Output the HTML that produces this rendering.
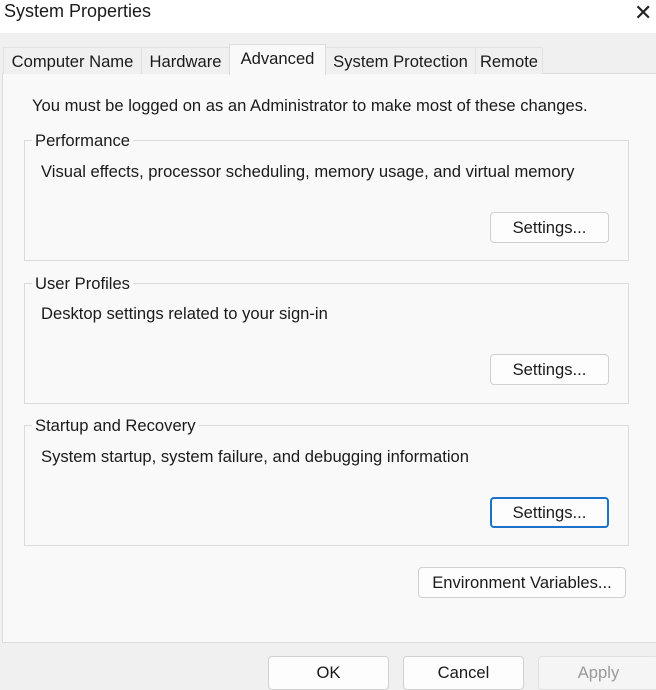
<!DOCTYPE html>
<html><head><style>
*{box-sizing:border-box;margin:0;padding:0}
body{width:656px;height:682px;overflow:hidden;background:#f0f0f0;font-family:"Liberation Sans",sans-serif;font-size:16.6px;color:#1a1a1a;position:relative}
.a{position:absolute;white-space:nowrap}
.title{left:0;top:0;width:656px;height:33px;background:#fff}
.tab{top:47px;height:27px;background:#f0f0f0;border:1px solid #e2e2e2;border-bottom:none;padding-top:4px;text-align:center}
.panel{left:2px;top:73px;width:660px;height:570px;background:#f9f9f9;border:1px solid #dcdcdc}
.grp{left:24px;width:605px;height:121px;border:1px solid #dadada}
.lg{background:#f9f9f9;padding:0 3px}
.btn{background:#fdfdfd;border:1px solid #d0d0d0;border-radius:4px;text-align:center;line-height:29px}
</style></head><body>
<div class="a title"></div>
<div class="a" style="left:4px;top:1px;font-size:18px;">System Properties</div>
<div class="a" style="left:634px;top:0px;font-size:22px;font-weight:300;color:#222">✕</div>
<div class="a panel"></div>
<div class="a tab" style="left:3px;width:139px">Computer Name</div>
<div class="a tab" style="left:141px;width:89px">Hardware</div>
<div class="a tab" style="left:325px;width:151px">System Protection</div>
<div class="a tab" style="left:475px;width:68px">Remote</div>
<div class="a" style="left:229px;top:44px;width:97px;height:31px;background:#f9f9f9;border:1px solid #dcdcdc;border-bottom:none;text-align:center;padding-top:4px">Advanced</div>
<div class="a" style="left:32px;top:96px">You must be logged on as an Administrator to make most of these changes.</div>

<div class="a grp" style="top:140px"></div>
<div class="a lg" style="left:32px;top:131px">Performance</div>
<div class="a" style="left:41px;top:162px">Visual effects, processor scheduling, memory usage, and virtual memory</div>
<div class="a btn" style="left:490px;top:212px;width:119px;height:31px">Settings...</div>

<div class="a grp" style="top:283px"></div>
<div class="a lg" style="left:32px;top:274px">User Profiles</div>
<div class="a" style="left:41px;top:304px">Desktop settings related to your sign-in</div>
<div class="a btn" style="left:490px;top:354px;width:119px;height:31px">Settings...</div>

<div class="a grp" style="top:425px"></div>
<div class="a lg" style="left:32px;top:416px">Startup and Recovery</div>
<div class="a" style="left:41px;top:447px">System startup, system failure, and debugging information</div>
<div class="a btn" style="left:490px;top:497px;width:119px;height:31px;border:2px solid #1a73c8;line-height:27px">Settings...</div>

<div class="a btn" style="left:418px;top:567px;width:208px;height:31px">Environment Variables...</div>

<div class="a btn" style="left:268px;top:656px;width:121px;height:34px;line-height:31px">OK</div>
<div class="a btn" style="left:403px;top:656px;width:121px;height:34px;line-height:31px">Cancel</div>
<div class="a btn" style="left:538px;top:656px;width:121px;height:34px;line-height:31px;background:#f5f5f5;border-color:#e0e0e0;color:#999">Apply</div>
</body></html>
